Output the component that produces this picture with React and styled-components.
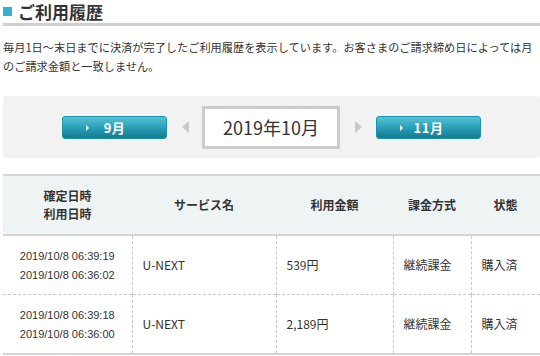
import React from 'react';
import styled, { createGlobalStyle } from 'styled-components';

const GlobalStyle = createGlobalStyle`
  html, body {
    margin: 0;
    padding: 0;
    background: #fff;
  }
  body {
    font-family: "Noto Sans CJK JP", "Liberation Sans", sans-serif;
    color: #333;
  }
`;

const Page = styled.div`
  width: 537px;
  padding-left: 3px;
  overflow: hidden;
`;

const Title = styled.h2`
  display: flex;
  align-items: center;
  gap: 6px;
  margin: 0;
  height: 23px;
  font-size: 17px;
  font-weight: bold;
  line-height: 23px;
  color: #333;
  border-bottom: 3px solid #cfcfcf;
  &::before {
    content: '';
    display: block;
    width: 9px;
    height: 9px;
    background: #2fb3d3;
  }
`;

const Lead = styled.p`
  margin: 12px 0 20px;
  font-size: 11.2px;
  line-height: 19px;
  color: #333;
`;

const MonthNav = styled.div`
  display: flex;
  align-items: center;
  justify-content: center;
  height: 62px;
  background: #f2f2f2;
  border-radius: 3px;
`;

const MonthButton = styled.a`
  position: relative;
  display: flex;
  align-items: center;
  justify-content: center;
  box-sizing: border-box;
  width: 105px;
  height: 23px;
  border: 1px solid #1c93a9;
  border-radius: 3px;
  background: linear-gradient(#56c3d9, #2aa0b8 50%, #117b8f);
  color: #fff;
  font-size: 13px;
  font-weight: bold;
  text-decoration: none;
  letter-spacing: 0.5px;
  &::before {
    content: '';
    position: absolute;
    left: 23px;
    top: 8px;
    border-left: 3px solid #fff;
    border-top: 3px solid transparent;
    border-bottom: 3px solid transparent;
  }
`;

const Arrow = styled.span`
  display: block;
  width: 0;
  height: 0;
  border-top: 6px solid transparent;
  border-bottom: 6px solid transparent;
  ${p => (p.$dir === 'left'
    ? 'border-right: 7px solid #c9c9c9; margin: 0 13px 0 15px;'
    : 'border-left: 7px solid #c9c9c9; margin: 0 14px 0 15px;')}
`;

const Current = styled.div`
  box-sizing: border-box;
  width: 138px;
  height: 43px;
  border: 3px solid #cccccc;
  background: #fff;
  display: flex;
  align-items: center;
  justify-content: center;
  font-size: 18px;
  color: #333;
`;

const Table = styled.table`
  width: 537px;
  margin-top: 16px;
  border-collapse: collapse;
  table-layout: fixed;
  font-size: 12px;
  color: #333;
  border-top: 2px solid #d4d4d4;
  border-bottom: 2px solid #d4d4d4;
`;

const Th = styled.th`
  height: 58px;
  padding: 0;
  background: #eef4f4;
  font-weight: bold;
  text-align: center;
  line-height: 18px;
  border-bottom: 2px solid #d4d4d4;
`;

const Td = styled.td`
  height: 58px;
  padding: 0 0 0 ${p => p.$pad || 0}px;
  text-align: ${p => (p.$center ? 'center' : 'left')};
  line-height: 18px;
  border-top: 1px dashed #c8c8c8;
  & + & {
    border-left: 1px dashed #c8c8c8;
  }
`;

const DateText = styled.span`
  font-family: "Liberation Sans", "Noto Sans CJK JP", sans-serif;
  font-size: 11px;
`;

const rows = [
  { fixed: '2019/10/8 06:39:19', used: '2019/10/8 06:36:02', service: 'U-NEXT', amount: '539円', type: '継続課金', status: '購入済' },
  { fixed: '2019/10/8 06:39:18', used: '2019/10/8 06:36:00', service: 'U-NEXT', amount: '2,189円', type: '継続課金', status: '購入済' },
];

export default function App() {
  return (
    <Page>
      <GlobalStyle />
      <Title>ご利用履歴</Title>
      <Lead>
        毎月1日～末日までに決済が完了したご利用履歴を表示しています。お客さまのご請求締め日によっては月のご請求金額と一致しません。
      </Lead>
      <MonthNav>
        <MonthButton href="#">9月</MonthButton>
        <Arrow $dir="left" />
        <Current>2019年10月</Current>
        <Arrow $dir="right" />
        <MonthButton href="#">11月</MonthButton>
      </MonthNav>
      <Table>
        <colgroup>
          <col style={{ width: 129 }} />
          <col style={{ width: 144 }} />
          <col style={{ width: 117 }} />
          <col style={{ width: 78 }} />
          <col style={{ width: 69 }} />
        </colgroup>
        <thead>
          <tr>
            <Th>確定日時<br />利用日時</Th>
            <Th>サービス名</Th>
            <Th>利用金額</Th>
            <Th>課金方式</Th>
            <Th>状態</Th>
          </tr>
        </thead>
        <tbody>
          {rows.map((r, i) => (
            <tr key={i}>
              <Td $center>
                <DateText>{r.fixed}<br />{r.used}</DateText>
              </Td>
              <Td $pad={10}>{r.service}</Td>
              <Td $pad={10}>{r.amount}</Td>
              <Td $pad={10}>{r.type}</Td>
              <Td $pad={10}>{r.status}</Td>
            </tr>
          ))}
        </tbody>
      </Table>
    </Page>
  );
}
